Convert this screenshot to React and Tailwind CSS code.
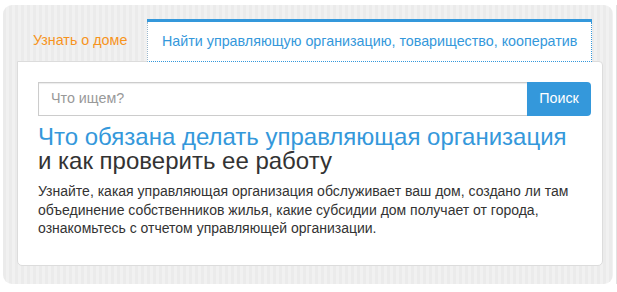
import React from 'react';

// Tabbed "find your house" widget: striped frame, two tabs, search and a short intro.

const BLUE = 'text-[#3498db]';

const Tabs = () => (
  <div className="flex items-end h-[43px]">
    <div className="w-[130px] shrink-0 h-[40px] flex items-center pl-[16px] text-[14.3px] text-[#f7941d] whitespace-nowrap">
      Узнать о доме
    </div>
    <div className="relative z-10 -mb-px w-[445px] shrink-0 h-[43px] flex flex-col bg-white">
      <div className="h-[3px] shrink-0 bg-[#3498db]" />
      <div className={`flex-1 flex items-center px-[14px] whitespace-nowrap border-x border-b border-dotted border-l-[#9ab7cc] border-r-[#3498db] border-b-[#3498db] text-[14.3px] ${BLUE}`}>
        Найти управляющую организацию, товарищество, кооператив
      </div>
    </div>
  </div>
);

const Search = () => (
  <div className="flex h-[34px]">
    <div className="flex-1 flex items-center pl-[12px] border border-[#cccccc] border-r-0 shadow-[inset_0_1px_1px_rgba(0,0,0,0.08)] text-[14.3px] text-[#999999]">
      Что ищем?
    </div>
    <button
      type="button"
      className="w-[64px] h-full bg-[#3498db] text-white text-[14.3px] rounded-r-[4px]"
    >
      Поиск
    </button>
  </div>
);

export default function App() {
  return (
    <div className="flex gap-[3px] pl-[3px] pt-[5px] font-['Liberation_Sans',Arial,sans-serif]">
      <div className="w-[610px] h-[279px] rounded-[9px] pt-[13px] pl-[14px] pr-[10px] pb-[18px] bg-[repeating-linear-gradient(90deg,#ebebeb_0,#ebebeb_3px,#f1f1f1_3px,#f1f1f1_6px)]">
        <Tabs />
        <div className="h-[205px] bg-white border border-[#dcdcdc] rounded-b-[5px] rounded-tr-[4px] pt-[20px] pl-[20px] pr-[11px]">
          <Search />
          <h2 className="mt-[9px] text-[24px] leading-[24px] text-[#333333]">
            <span className={BLUE}>Что обязана делать управляющая организация</span>
            <br />
            и как проверить ее работу
          </h2>
          <p className="mt-[9px] text-[14px] leading-[18.5px] text-[#333333]">
            Узнайте, какая управляющая организация обслуживает ваш дом, создано ли там
            <br />
            объединение собственников жилья, какие субсидии дом получает от города,
            <br />
            ознакомьтесь с отчетом управляющей организации.
          </p>
        </div>
      </div>
      <div className="w-px h-[279px] bg-[#e2e2e2]" />
    </div>
  );
}
